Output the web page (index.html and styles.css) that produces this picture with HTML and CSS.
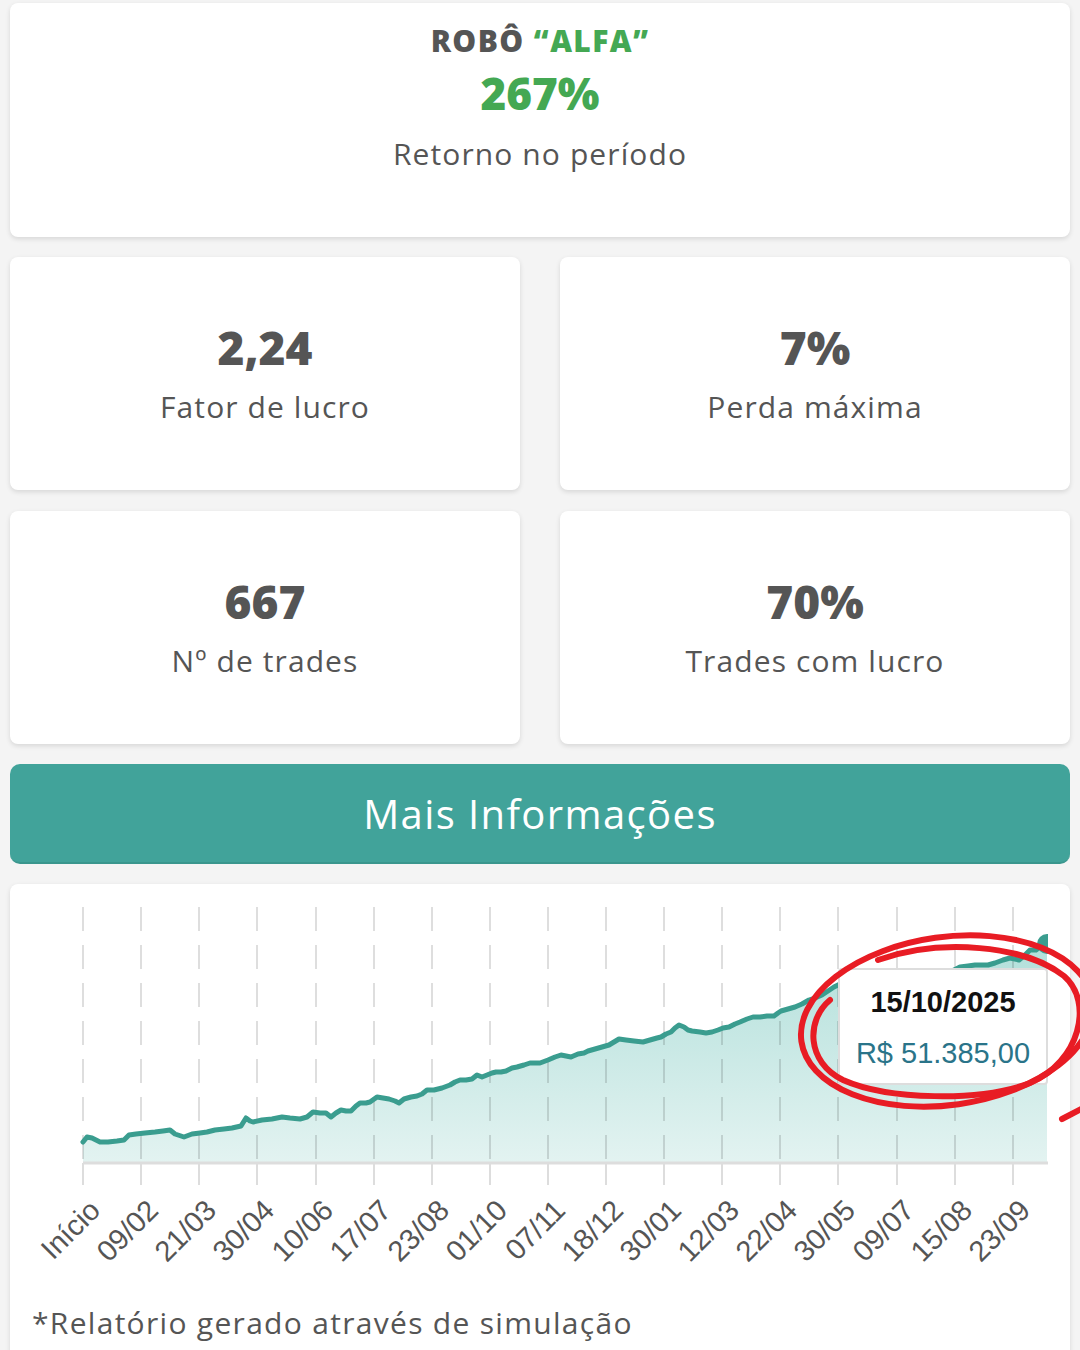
FILE: index.html
```html
<!DOCTYPE html>
<html lang="pt-BR">
<head>
    <meta charset="UTF-8">
    <meta name="viewport" content="width=device-width, initial-scale=1.0">
    <title>Robô Alfa - Resultado</title>
    <link rel="stylesheet" href="styles.css">
</head>
<body>

    <!-- resumo principal -->
    <div class="card card-main">
        <h2 class="robot-name">ROBÔ <span class="green">“ALFA”</span></h2>
        <div class="main-value">267%</div>
        <div class="label">Retorno no período</div>
    </div>

    <!-- indicadores -->
    <div class="stats">
        <div class="card stat">
            <div class="value">2,24</div>
            <div class="label">Fator de lucro</div>
        </div>
        <div class="card stat">
            <div class="value">7%</div>
            <div class="label">Perda máxima</div>
        </div>
        <div class="card stat">
            <div class="value">667</div>
            <div class="label">Nº de trades</div>
        </div>
        <div class="card stat">
            <div class="value">70%</div>
            <div class="label">Trades com lucro</div>
        </div>
    </div>

    <button class="more-btn">Mais Informações</button>

    <!-- grafico de patrimonio -->
    <div class="card chart-card">
        <svg class="chart" width="1060" height="412" viewBox="10 884 1060 412">
            <defs>
                <linearGradient id="areaFill" x1="0" y1="940" x2="0" y2="1163" gradientUnits="userSpaceOnUse">
                    <stop offset="0" stop-color="#b1dfda"/>
                    <stop offset="1" stop-color="#e3f3f1"/>
                </linearGradient>
                <clipPath id="plotClip">
                    <rect x="60" y="900" width="988" height="270"/>
                </clipPath>
            </defs>

            <g clip-path="url(#plotClip)">
                <path class="area" d="M83,1142 L87,1137 92,1138 100,1142 108,1142 117,1141 124,1140 129,1135 136,1134 145,1133 155,1132 163,1131 170,1130 175,1134 184,1137 192,1134 200,1133 207,1132 215,1130 224,1129 232,1128 241,1126 246,1118 250,1121 253,1122 262,1120 272,1119 282,1117 290,1118 300,1119 307,1117 313,1112 320,1113 326,1113 331,1117 336,1113 341,1110 346,1111 351,1111 356,1106 360,1103 366,1103 370,1102 377,1097 383,1098 389,1099 395,1101 399,1103 404,1099 411,1097 417,1096 422,1094 427,1090 434,1090 442,1088 450,1085 455,1082 460,1080 466,1080 472,1079 477,1075 482,1077 487,1075 492,1073 496,1072 501,1072 506,1071 512,1068 517,1067 524,1065 530,1063 535,1063 540,1063 548,1060 555,1057 561,1055 566,1056 571,1057 578,1054 584,1053 588,1051 595,1049 602,1047 609,1045 614,1042 619,1039 626,1040 634,1041 643,1042 650,1040 657,1038 661,1037 666,1034 671,1032 675,1028 679,1025 684,1027 688,1030 692,1031 700,1032 706,1033 712,1032 718,1030 723,1028 729,1027 735,1024 740,1022 747,1019 753,1017 760,1017 767,1016 774,1016 778,1013 781,1011 788,1009 795,1007 802,1004 809,1000 815,998 822,995 828,991 834,987 840,984 870,982 900,980 930,976 950,972 960,967 968,966 975,965 988,965 995,963 1003,960 1010,958 1019,960 1025,955 1030,950 1036,950 1041,946 1047,942 L1047,1163 L83,1163 Z"/>

                <g class="grid">
                    <line x1="83" y1="907" x2="83" y2="1163"/>
                    <line x1="141" y1="907" x2="141" y2="1163"/>
                    <line x1="199" y1="907" x2="199" y2="1163"/>
                    <line x1="257" y1="907" x2="257" y2="1163"/>
                    <line x1="316" y1="907" x2="316" y2="1163"/>
                    <line x1="374" y1="907" x2="374" y2="1163"/>
                    <line x1="432" y1="907" x2="432" y2="1163"/>
                    <line x1="490" y1="907" x2="490" y2="1163"/>
                    <line x1="548" y1="907" x2="548" y2="1163"/>
                    <line x1="606" y1="907" x2="606" y2="1163"/>
                    <line x1="664" y1="907" x2="664" y2="1163"/>
                    <line x1="722" y1="907" x2="722" y2="1163"/>
                    <line x1="780" y1="907" x2="780" y2="1163"/>
                    <line x1="838" y1="907" x2="838" y2="1163"/>
                    <line x1="897" y1="907" x2="897" y2="1163"/>
                    <line x1="955" y1="907" x2="955" y2="1163"/>
                    <line x1="1013" y1="907" x2="1013" y2="1163"/>
                </g>

                <polyline class="line" points="83,1142 87,1137 92,1138 100,1142 108,1142 117,1141 124,1140 129,1135 136,1134 145,1133 155,1132 163,1131 170,1130 175,1134 184,1137 192,1134 200,1133 207,1132 215,1130 224,1129 232,1128 241,1126 246,1118 250,1121 253,1122 262,1120 272,1119 282,1117 290,1118 300,1119 307,1117 313,1112 320,1113 326,1113 331,1117 336,1113 341,1110 346,1111 351,1111 356,1106 360,1103 366,1103 370,1102 377,1097 383,1098 389,1099 395,1101 399,1103 404,1099 411,1097 417,1096 422,1094 427,1090 434,1090 442,1088 450,1085 455,1082 460,1080 466,1080 472,1079 477,1075 482,1077 487,1075 492,1073 496,1072 501,1072 506,1071 512,1068 517,1067 524,1065 530,1063 535,1063 540,1063 548,1060 555,1057 561,1055 566,1056 571,1057 578,1054 584,1053 588,1051 595,1049 602,1047 609,1045 614,1042 619,1039 626,1040 634,1041 643,1042 650,1040 657,1038 661,1037 666,1034 671,1032 675,1028 679,1025 684,1027 688,1030 692,1031 700,1032 706,1033 712,1032 718,1030 723,1028 729,1027 735,1024 740,1022 747,1019 753,1017 760,1017 767,1016 774,1016 778,1013 781,1011 788,1009 795,1007 802,1004 809,1000 815,998 822,995 828,991 834,987 840,984 870,982 900,980 930,976 950,972 960,967 968,966 975,965 988,965 995,963 1003,960 1010,958 1019,960 1025,955 1030,950 1036,950 1041,946 1047,942"/>
                <circle class="dot" cx="1047" cy="944" r="10"/>
            </g>

            <line class="axis" x1="83" y1="1163" x2="1048" y2="1163"/>
            <g class="ticks">
                <line x1="83" y1="1163" x2="83" y2="1185"/>
                <line x1="141" y1="1163" x2="141" y2="1185"/>
                <line x1="199" y1="1163" x2="199" y2="1185"/>
                <line x1="257" y1="1163" x2="257" y2="1185"/>
                <line x1="316" y1="1163" x2="316" y2="1185"/>
                <line x1="374" y1="1163" x2="374" y2="1185"/>
                <line x1="432" y1="1163" x2="432" y2="1185"/>
                <line x1="490" y1="1163" x2="490" y2="1185"/>
                <line x1="548" y1="1163" x2="548" y2="1185"/>
                <line x1="606" y1="1163" x2="606" y2="1185"/>
                <line x1="664" y1="1163" x2="664" y2="1185"/>
                <line x1="722" y1="1163" x2="722" y2="1185"/>
                <line x1="780" y1="1163" x2="780" y2="1185"/>
                <line x1="838" y1="1163" x2="838" y2="1185"/>
                <line x1="897" y1="1163" x2="897" y2="1185"/>
                <line x1="955" y1="1163" x2="955" y2="1185"/>
                <line x1="1013" y1="1163" x2="1013" y2="1185"/>
            </g>

            <g class="xlabels">
                <text transform="translate(102,1212) rotate(-45)">Início</text>
                <text transform="translate(160,1212) rotate(-45)">09/02</text>
                <text transform="translate(218,1212) rotate(-45)">21/03</text>
                <text transform="translate(276,1212) rotate(-45)">30/04</text>
                <text transform="translate(335,1212) rotate(-45)">10/06</text>
                <text transform="translate(393,1212) rotate(-45)">17/07</text>
                <text transform="translate(451,1212) rotate(-45)">23/08</text>
                <text transform="translate(509,1212) rotate(-45)">01/10</text>
                <text transform="translate(567,1212) rotate(-45)">07/11</text>
                <text transform="translate(625,1212) rotate(-45)">18/12</text>
                <text transform="translate(683,1212) rotate(-45)">30/01</text>
                <text transform="translate(741,1212) rotate(-45)">12/03</text>
                <text transform="translate(799,1212) rotate(-45)">22/04</text>
                <text transform="translate(857,1212) rotate(-45)">30/05</text>
                <text transform="translate(916,1212) rotate(-45)">09/07</text>
                <text transform="translate(974,1212) rotate(-45)">15/08</text>
                <text transform="translate(1032,1212) rotate(-45)">23/09</text>
            </g>
        </svg>

        <!-- tooltip do ponto ativo -->
        <div class="tooltip">
            <div class="tip-date">15/10/2025</div>
            <div class="tip-value">R$ 51.385,00</div>
        </div>

        <!-- marcacao feita a mao -->
        <svg class="scribble" width="300" height="200" viewBox="790 925 300 200">
            <ellipse cx="947" cy="1021" rx="147" ry="84" transform="rotate(-8 947 1021)"/>
            <path d="M878,960 C940,938 1025,945 1064,976 C1094,1002 1080,1062 1030,1083 C980,1102 888,1100 843,1080 C806,1062 806,1020 830,1000"/>
            <path d="M1062,1119 L1083,1108"/>
        </svg>

        <p class="footnote">*Relatório gerado através de simulação</p>
    </div>

</body>
</html>
```

FILE: styles.css
```css
body {
    font-family: 'Open Sans', sans-serif;
    background-color: #f4f4f4;
    margin: 0;
    padding: 3px 10px 0 10px;
    color: #555;
    overflow: hidden;
}
.card {
    background-color: #fff;
    border-radius: 8px;
    box-shadow: 0 2px 5px rgba(0, 0, 0, 0.12);
}
.card-main {
    height: 234px;
    box-sizing: border-box;
    padding-top: 18px;
    text-align: center;
}
.robot-name {
    margin: 0;
    font-size: 30px;
    font-weight: 800;
    line-height: 40px;
    letter-spacing: 1.4px;
    color: #555;
}
.green {
    color: #44a853;
}
.main-value {
    font-size: 44px;
    font-weight: 800;
    line-height: 60px;
    color: #44a853;
    margin-top: 2px;
}
.label {
    font-size: 30px;
    line-height: 40px;
    letter-spacing: 1.1px;
    color: #555;
}
.card-main .label {
    margin-top: 11px;
}
.stats {
    display: grid;
    grid-template-columns: 1fr 1fr;
    column-gap: 40px;
    row-gap: 21px;
    margin-top: 20px;
}
.stat {
    height: 233px;
    box-sizing: border-box;
    padding-bottom: 4px;
    display: flex;
    flex-direction: column;
    align-items: center;
    justify-content: center;
    text-align: center;
}
.stat .value {
    font-size: 46px;
    font-weight: 800;
    line-height: 60px;
    color: #555;
}
.stat .label {
    margin-top: 10px;
}
.more-btn {
    display: block;
    width: 100%;
    height: 100px;
    margin-top: 20px;
    background-color: #41a39a;
    color: #fff;
    border: none;
    border-bottom: 2px solid #3a968d;
    border-radius: 10px;
    font-family: 'Open Sans', sans-serif;
    font-size: 40px;
    letter-spacing: 1.4px;
    cursor: pointer;
}
.chart-card {
    position: relative;
    margin-top: 20px;
    height: 480px;
}
.chart {
    display: block;
    overflow: visible;
}
.area {
    fill: url(#areaFill);
}
.grid line {
    stroke: rgba(0, 0, 0, 0.13);
    stroke-width: 2;
    stroke-dasharray: 24 14;
}
.line {
    fill: none;
    stroke: #3a9d8f;
    stroke-width: 5;
    stroke-linejoin: round;
    stroke-linecap: round;
}
.dot {
    fill: #3a9d8f;
}
.axis {
    stroke: #ddd;
    stroke-width: 3;
}
.ticks line {
    stroke: #ddd;
    stroke-width: 2;
}
.xlabels text {
    font-family: 'Liberation Sans', Arial, sans-serif;
    font-size: 29px;
    fill: #555;
    text-anchor: end;
}
.tooltip {
    position: absolute;
    left: 828px;
    top: 84px;
    width: 206px;
    height: 113px;
    background-color: #fff;
    border: 2px solid #ddd;
    border-radius: 4px;
    text-align: center;
    font-family: 'Liberation Sans', Arial, sans-serif;
    font-size: 29px;
}
.tip-date {
    font-weight: bold;
    color: #111;
    margin-top: 16px;
}
.tip-value {
    color: #2a7489;
    margin-top: 18px;
}
.scribble {
    position: absolute;
    left: 780px;
    top: 41px;
    overflow: visible;
}
.scribble ellipse, .scribble path {
    fill: none;
    stroke: #e81c24;
    stroke-width: 6;
    stroke-linecap: round;
}
.footnote {
    margin: 0;
    padding: 7px 0 0 22px;
    font-size: 30px;
    line-height: 40px;
    letter-spacing: 1.3px;
    color: #555;
}
```
